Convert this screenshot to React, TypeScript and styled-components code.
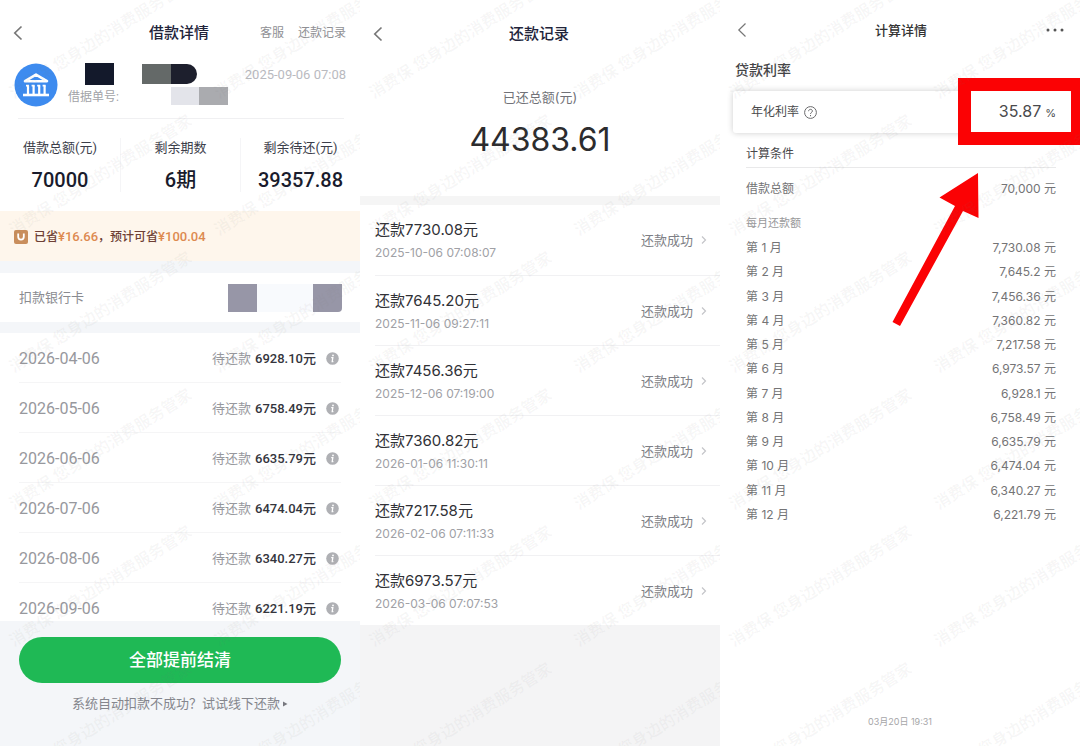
import React from "react";
import styled, { createGlobalStyle, css } from "styled-components";

const GlobalStyle = createGlobalStyle`
  *, *::before, *::after { box-sizing: border-box; }
  body {
    margin: 0;
    background: #fff;
    font-family: Inter, "Noto Sans CJK SC", sans-serif;
  }
  h1, h2, p, ul, dl, dd, dt { margin: 0; padding: 0; }
  ul { list-style: none; }
  button { border: 0; padding: 0; background: none; font: inherit; color: inherit; cursor: pointer; }
  a { color: inherit; text-decoration: none; }
  svg { display: block; }
`;

/* ---------- shared ---------- */

const Page = styled.main`
  display: grid;
  grid-template-columns: repeat(3, minmax(0, 1fr));
  min-height: 100vh;
`;

const Screen = styled.section<{ $din?: boolean }>`
  position: relative;
  display: flex;
  flex-direction: column;
  overflow: hidden;
  background: #fff;
  ${(p) => p.$din && css`font-family: Roboto, "Noto Sans CJK SC", sans-serif;`}
`;

const Header = styled.header<{ $height: number; $pad?: number }>`
  display: grid;
  grid-template-columns: 1fr auto 1fr;
  align-items: center;
  height: ${(p) => p.$height}px;
  padding: 4px 14px 0 ${(p) => p.$pad ?? 12}px;
`;

const Title = styled.h1<{ $small?: boolean }>`
  font-size: ${(p) => (p.$small ? 13 : 15)}px;
  line-height: 20px;
  font-weight: 500;
  color: ${(p) => (p.$small ? "#333" : "#22243a")};
`;

const BackButton = styled.button`
  width: 12px;
  height: 20px;
  display: flex;
  align-items: center;
  justify-content: center;
  color: #777;
`;

const HeaderActions = styled.nav`
  display: flex;
  justify-content: flex-end;
  gap: 14px;
  font-size: 12px;
  line-height: 20px;
  color: #8f9094;
  white-space: nowrap;
`;

const Band = styled.div<{ $height: number; $color: string }>`
  height: ${(p) => p.$height}px;
  background: ${(p) => p.$color};
`;

const WatermarkLayer = styled.div`
  position: absolute;
  inset: 0;
  overflow: hidden;
  pointer-events: none;
  display: grid;
  grid-template-columns: 205px 205px;
  grid-auto-rows: 137px;
  align-items: end;
  padding-left: 10px;
  color: rgba(120, 120, 120, 0.06);
  font: 700 16px/20px "Noto Sans CJK SC", sans-serif;
  user-select: none;
`;

const WatermarkText = styled.span`
  height: 54px;
  white-space: nowrap;
  transform-origin: 0 10px;
  transform: rotate(-32deg);
`;

function Watermark() {
  return (
    <WatermarkLayer aria-hidden="true">
      {Array.from({ length: 14 }, (_, i) => (
        <WatermarkText key={i}>消费保 您身边的消费服务管家</WatermarkText>
      ))}
    </WatermarkLayer>
  );
}

function Back({ thin }: { thin?: boolean }) {
  return (
    <BackButton type="button" aria-label="返回">
      <svg width="10" height="16" viewBox="0 0 10 16" fill="none" stroke="currentColor" strokeWidth={thin ? 1.2 : 1.7}>
        <path d="M8.5 1.5 1.8 8l6.7 6.5" />
      </svg>
    </BackButton>
  );
}

/* ---------- loan detail ---------- */

const LoanSummary = styled.div`
  display: flex;
  height: 57px;
  margin-left: 14px;
  padding: 1px 14px 10px 0;
  position: relative;
  &::after {
    content: "";
    position: absolute;
    left: 4px;
    right: 16px;
    bottom: 0;
    height: 1px;
    background: #f0f0f2;
  }
`;

const LoanInfo = styled.div`
  flex: 1;
  min-width: 0;
  margin-left: 10px;
`;

const InfoLine = styled.div`
  display: flex;
  align-items: center;
  height: 22px;
  font-size: 12px;
  line-height: 20px;
  color: #a2a3a7;
  white-space: nowrap;
`;

const Redacted = styled.span<{ $w: number; $h: number; $bg: string; $gap?: number; $round?: string }>`
  flex: none;
  width: ${(p) => p.$w}px;
  height: ${(p) => p.$h}px;
  margin-left: ${(p) => p.$gap ?? 0}px;
  background: ${(p) => p.$bg};
  border-radius: ${(p) => p.$round ?? "0"};
`;

const LoanLabel = styled.span`
  width: 57px;
  padding-top: 2px;
`;

const LoanTime = styled.time`
  margin-left: auto;
  padding-top: 2px;
  font-size: 13px;
  color: #b9babf;
`;

const Stats = styled.dl`
  display: grid;
  grid-template-columns: repeat(3, 1fr);
  height: 92px;
  padding-top: 19px;
  text-align: center;
`;

const Stat = styled.div`
  height: 54px;
  & + & { border-left: 1px solid #f5f5f7; }
  dt { font-size: 13px; line-height: 20px; color: #3c3e4a; }
  dd { margin-top: 9px; font-size: 20px; line-height: 26px; font-weight: 500; color: #191b2c; }
`;

const SavingsBanner = styled.p`
  display: flex;
  align-items: center;
  height: 50px;
  padding: 1px 14px 0;
  background: #fef6ec;
  font-size: 12px;
  line-height: 20px;
  font-weight: 500;
  color: #6e3f35;
  svg { margin-right: 6px; }
  b { font-size: 13px; font-weight: 500; color: #dd8a50; }
`;

const BankRow = styled.div`
  display: flex;
  align-items: center;
  height: 49px;
  padding: 0 18px 0 19px;
  font-size: 13px;
  line-height: 20px;
  color: #8a8b90;
`;

const CardMask = styled.div`
  display: flex;
  margin-left: auto;
`;

const Schedule = styled.ul`
  padding: 0 19px;
`;

const ScheduleRow = styled.li`
  display: flex;
  align-items: center;
  padding: 16px 2px 13px 0;
  border-bottom: 1px solid #f5f5f6;
  font-size: 13px;
  line-height: 20px;
  color: #97989d;
  time { font-size: 16px; }
  strong { margin-left: 4px; font-weight: 500; color: #34353d; }
  &:last-child { padding-bottom: 2px; border-bottom: 0; }
`;

const DueLabel = styled.span`
  margin-left: auto;
`;

const InfoButton = styled.button`
  margin-left: 10px;
  padding-bottom: 2px;
`;

const PayFooter = styled.footer`
  flex: 1;
  padding: 16px 19px;
  background: #f4f6f9;
  text-align: center;
`;

const PayButton = styled.button`
  width: 100%;
  height: 46px;
  border-radius: 23px;
  background: #1fb955;
  color: #fff;
  font-size: 17px;
  line-height: 24px;
  font-weight: 500;
`;

const OfflineLink = styled.a`
  display: flex;
  align-items: center;
  justify-content: center;
  gap: 3px;
  margin-top: 11px;
  font-size: 13px;
  line-height: 20px;
  color: #85868d;
`;

const schedule = [
  ["2026-04-06", "6928.10"],
  ["2026-05-06", "6758.49"],
  ["2026-06-06", "6635.79"],
  ["2026-07-06", "6474.04"],
  ["2026-08-06", "6340.27"],
  ["2026-09-06", "6221.19"],
];

function LoanDetail() {
  return (
    <Screen $din>
      <Header $height={62}>
        <Back />
        <Title>借款详情</Title>
        <HeaderActions>
          <a href="#service">客服</a>
          <a href="#records">还款记录</a>
        </HeaderActions>
      </Header>
      <LoanSummary>
        <svg width="44" height="44" viewBox="0 0 44 44" aria-hidden="true">
          <circle cx="22" cy="22" r="21.5" fill="#3d8bef" />
          <g fill="none" stroke="#fff">
            <path d="M11 18.2 22 11.6l11 6.6z" strokeWidth="2.6" strokeLinejoin="round" />
            <path d="M9 32h26" strokeWidth="2.6" />
            <path d="M14 22.5v9M19.600 22.500v9M25.200 22.500v9M30.600 22.500v9" strokeWidth="2.2" />
            <path d="M12 22.600h3M17.600 22.600h3M23.200 22.600h3M28.600 22.600h3" strokeWidth="1.6" />
          </g>
        </svg>
        <LoanInfo>
          <InfoLine>
            <Redacted $w={29} $h={22} $bg="#13192b" $gap={17} />
            <Redacted $w={29} $h={20} $bg="#646968" $gap={28} />
            <Redacted $w={26} $h={20} $bg="#1d1f2d" $round="0 10px 10px 0" />
            <LoanTime>2025-09-06 07:08</LoanTime>
          </InfoLine>
          <InfoLine>
            <LoanLabel>借据单号:</LoanLabel>
            <Redacted $w={28} $h={18} $bg="#e3e4ea" $gap={46} />
            <Redacted $w={29} $h={18} $bg="#aaabaf" />
          </InfoLine>
        </LoanInfo>
      </LoanSummary>
      <Stats>
        <Stat><dt>借款总额(元)</dt><dd>70000</dd></Stat>
        <Stat><dt>剩余期数</dt><dd>6期</dd></Stat>
        <Stat><dt>剩余待还(元)</dt><dd>39357.88</dd></Stat>
      </Stats>
      <SavingsBanner>
        <svg width="14" height="14" viewBox="0 0 14 14" aria-hidden="true">
          <rect width="14" height="14" rx="2" fill="#c98e5c" />
          <path d="M4.2 3.6v3.2a2.8 2.8 0 0 0 5.6 0V3.6" fill="none" stroke="#fff" strokeWidth="1.8" />
        </svg>
        已省<b>¥16.66</b>，预计可省<b>¥100.04</b>
      </SavingsBanner>
      <Band $height={12} $color="#f4f6f9" />
      <BankRow>
        扣款银行卡
        <CardMask>
          <Redacted $w={29} $h={28} $bg="#9796a7" />
          <Redacted $w={56} $h={28} $bg="#f8fafd" />
          <Redacted $w={29} $h={28} $bg="#9796a7" $round="0 0 4px 0" />
        </CardMask>
      </BankRow>
      <Band $height={11} $color="#f4f6f9" />
      <Schedule>
        {schedule.map(([date, amount]) => (
          <ScheduleRow key={date}>
            <time>{date}</time>
            <DueLabel>待还款</DueLabel>
            <strong>{amount}元</strong>
            <InfoButton type="button" aria-label="说明">
              <svg width="13" height="13" viewBox="0 0 13 13">
                <circle cx="6.5" cy="6.5" r="6.3" fill="#afb0b4" />
                <path d="M5.2 5.6h1.6L6.2 9.6h1.2" fill="none" stroke="#fff" strokeWidth="1.3" />
                <circle cx="7" cy="3.4" r="0.9" fill="#fff" />
              </svg>
            </InfoButton>
          </ScheduleRow>
        ))}
      </Schedule>
      <PayFooter>
        <PayButton type="button">全部提前结清</PayButton>
        <OfflineLink href="#offline">
          系统自动扣款不成功？试试线下还款
          <svg width="5" height="6" viewBox="0 0 5 6" aria-hidden="true"><path d="M0 .5 4.5 3 0 5.5z" fill="#77787f" /></svg>
        </OfflineLink>
      </PayFooter>
      <Watermark />
    </Screen>
  );
}

/* ---------- repayment records ---------- */

const Total = styled.div`
  height: 132px;
  padding-top: 23px;
  text-align: center;
  p { font-size: 13px; line-height: 20px; color: #717278; }
  strong { display: block; margin-top: 13px; font-size: 32px; line-height: 40px; font-weight: 400; color: #2c2c2e; }
`;

const RecordList = styled.ul`
  padding-left: 15px;
`;

const RecordRow = styled.li`
  & + & { border-top: 1px solid #f1f1f3; }
  &:first-child { padding-bottom: 1px; }
`;

const RecordLink = styled.a`
  display: flex;
  align-items: center;
  gap: 8px;
  height: 69px;
  padding-right: 13px;
  font-size: 13px;
  line-height: 20px;
  color: #7e7f86;
`;

const RecordText = styled.div`
  margin-right: auto;
  padding-top: 2px;
  h2 { font-size: 15px; line-height: 24px; font-weight: 400; color: #303136; }
  time { display: block; font-size: 12px; line-height: 22px; color: #a0a1a6; }
`;

const GreyFill = styled.div`
  flex: 1;
  background: #f4f4f5;
`;

const records = [
  ["7730.08", "2025-10-06 07:08:07"],
  ["7645.20", "2025-11-06 09:27:11"],
  ["7456.36", "2025-12-06 07:19:00"],
  ["7360.82", "2026-01-06 11:30:11"],
  ["7217.58", "2026-02-06 07:11:33"],
  ["6973.57", "2026-03-06 07:07:53"],
];

function Records() {
  return (
    <Screen>
      <Header $height={64}>
        <Back />
        <Title>还款记录</Title>
      </Header>
      <Total>
        <p>已还总额(元)</p>
        <strong>44383.61</strong>
      </Total>
      <Band $height={9} $color="#f5f5f5" />
      <RecordList>
        {records.map(([amount, time]) => (
          <RecordRow key={time}>
            <RecordLink href="#record">
              <RecordText>
                <h2>还款{amount}元</h2>
                <time>{time}</time>
              </RecordText>
              <span>还款成功</span>
              <svg width="6" height="10" viewBox="0 0 6 10" fill="none" stroke="#c4c5c9" strokeWidth="1.2" aria-hidden="true">
                <path d="m1 1.5 3.5 3.5L1 8.5" />
              </svg>
            </RecordLink>
          </RecordRow>
        ))}
      </RecordList>
      <GreyFill />
      <Watermark />
    </Screen>
  );
}

/* ---------- calculation detail ---------- */

const MoreButton = styled.button`
  justify-self: end;
`;

const SectionTitle = styled.h2`
  padding: 4px 15px 0;
  font-size: 14px;
  line-height: 20px;
  font-weight: 500;
  color: #444446;
`;

const RateArea = styled.div`
  position: relative;
  margin-top: 11px;
  padding: 0 9px 0 13px;
`;

const RateCard = styled.div`
  display: flex;
  align-items: center;
  height: 42px;
  padding: 0 15px 0 18px;
  border-radius: 3px;
  background: #fff;
  box-shadow: 0 0 6px rgba(0, 0, 0, 0.2);
  font-size: 12px;
  line-height: 20px;
  color: #4a4a4c;
  svg { margin-left: 5px; }
`;

const RateValue = styled.output`
  margin-left: auto;
  font-size: 16px;
  small { margin-left: 4px; font-size: 11px; }
`;

const Highlight = styled.div`
  position: absolute;
  top: -13px;
  right: 0;
  width: 122px;
  height: 67px;
  border: 13px solid #fb0204;
  border-right-width: 9px;
`;

const Arrow = styled.svg`
  position: absolute;
  top: 81px;
  right: 100px;
`;

const Details = styled.div`
  flex: 1;
  padding: 11px 24px 0 26px;
  color: #747476;
  font-size: 12px;
  line-height: 20px;
`;

const DetailsHeading = styled.h2`
  padding-bottom: 3px;
  border-bottom: 1px solid #e9e9ea;
  font-size: 12px;
  line-height: 20px;
  font-weight: 400;
  color: #48484a;
`;

const Principal = styled.p`
  display: flex;
  justify-content: space-between;
  margin-top: 11px;
`;

const MonthTable = styled.table`
  width: 100%;
  height: 291px;
  margin-top: 11px;
  border-collapse: collapse;
  caption { text-align: left; font-size: 11px; line-height: 26px; color: #98989a; }
  th, td { padding: 0; text-align: left; font-weight: 400; line-height: 20px; }
  td { text-align: right; }
`;

const Timestamp = styled.footer`
  padding: 4px 0 14px;
  text-align: center;
  font-size: 9px;
  line-height: 20px;
  color: #a6a6a8;
`;

const months = [
  "7,730.08", "7,645.2", "7,456.36", "7,360.82", "7,217.58", "6,973.57",
  "6,928.1", "6,758.49", "6,635.79", "6,474.04", "6,340.27", "6,221.79",
];

function Calculation() {
  return (
    <Screen>
      <Header $height={56} $pad={16}>
        <Back thin />
        <Title $small>计算详情</Title>
        <MoreButton type="button" aria-label="更多">
          <svg width="20" height="4" viewBox="0 0 20 4" fill="#555">
            <circle cx="2" cy="2" r="1.5" /><circle cx="9" cy="2" r="1.5" /><circle cx="16" cy="2" r="1.5" />
          </svg>
        </MoreButton>
      </Header>
      <SectionTitle>贷款利率</SectionTitle>
      <RateArea>
        <RateCard>
          年化利率
          <svg width="13" height="13" viewBox="0 0 13 13" fill="none" stroke="#6a6a6c" aria-hidden="true">
            <circle cx="6.5" cy="6.5" r="5.9" />
            <path d="M4.6 5.2c0-2.5 3.800-2.400 3.800-.2 0 1.500-1.900 1.500-1.900 3M6.500 9v1.200" />
          </svg>
          <RateValue>35.87<small>%</small></RateValue>
        </RateCard>
        <Highlight />
        <Arrow width="90" height="156" viewBox="0 0 90 156" fill="#fb0204" aria-hidden="true">
          <path d="M88 1 49.500 25.500l15.500 8.500L2.500 150l7.500 4L73 39l15.500 7z" />
        </Arrow>
      </RateArea>
      <Details>
        <DetailsHeading>计算条件</DetailsHeading>
        <Principal><span>借款总额</span><span>70,000 元</span></Principal>
        <MonthTable>
          <caption>每月还款额</caption>
          <tbody>
            {months.map((amount, i) => (
              <tr key={i}>
                <th scope="row">第 {i + 1} 月</th>
                <td>{amount} 元</td>
              </tr>
            ))}
          </tbody>
        </MonthTable>
      </Details>
      <Timestamp>03月20日 19:31</Timestamp>
      <Watermark />
    </Screen>
  );
}

export default function App() {
  return (
    <>
      <GlobalStyle />
      <Page>
        <LoanDetail />
        <Records />
        <Calculation />
      </Page>
    </>
  );
}
